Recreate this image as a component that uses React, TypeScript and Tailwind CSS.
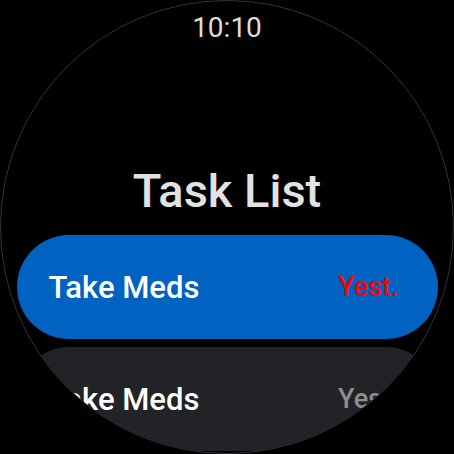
const tasks = [
  { name: "Take Meds", due: "Yest.", active: true },
  { name: "Take Meds", due: "Yest.", active: false },
]

function TaskChip({ name, due, active }: { name: string; due: string; active: boolean }) {
  return (
    <div
      className={`flex h-[104px] w-[421px] shrink-0 items-center justify-between rounded-full pl-[32px] pr-[39px] ${
        active ? "bg-[#0062c1]" : "bg-[#222326]"
      }`}
    >
      <span className="text-[31px] font-medium leading-none text-white">{name}</span>
      <span className={`text-[27px] font-medium leading-none ${active ? "text-[#ff0000]" : "text-[#8e8e8e]"}`}>
        {due}
      </span>
    </div>
  )
}

export default function App() {
  return (
    <div className="h-[454px] w-[454px] bg-black" style={{ fontFamily: "Roboto, 'Noto Sans', sans-serif" }}>
      <div className="flex h-[454px] w-[454px] flex-col items-center overflow-hidden rounded-full border border-[#333333]">
        <div className="mt-[13px] text-[28px] leading-none text-[#dedede]">10:10</div>
        <h1 className="mt-[125px] text-[47px] font-medium leading-none text-[#e2e2e2]">Task List</h1>
        <div className="mt-[21px] flex flex-col items-center gap-[8px]">
          {tasks.map((t, i) => (
            <TaskChip key={i} {...t} />
          ))}
        </div>
      </div>
    </div>
  )
}
